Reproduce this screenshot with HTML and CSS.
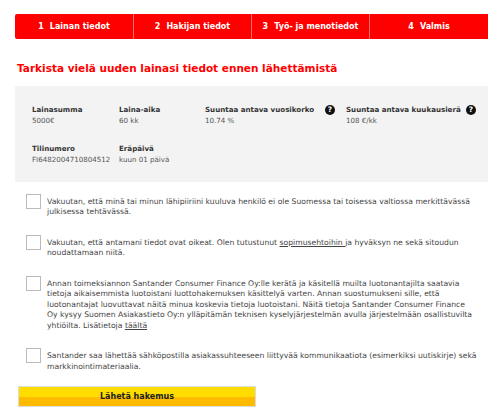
FILE: index.html
```html
<!DOCTYPE html>
<html lang="fi">
<head>
<meta charset="utf-8">
<title>Lainahakemus</title>
<link rel="stylesheet" href="styles.css">
</head>
<body>
<main class="page">
  <nav class="steps">
    <div class="step"><span class="num">1</span>Lainan tiedot</div>
    <div class="step"><span class="num">2</span>Hakijan tiedot</div>
    <div class="step"><span class="num">3</span>Työ- ja menotiedot</div>
    <div class="step"><span class="num">4</span>Valmis</div>
  </nav>
  <h1 class="title">Tarkista vielä uuden lainasi tiedot ennen lähettämistä</h1>
  <section class="summary">
    <div class="row">
      <div class="cell c1"><div class="label">Lainasumma</div><div class="value">5000€</div></div>
      <div class="cell c2"><div class="label">Laina-aika</div><div class="value">60 kk</div></div>
      <div class="cell c3"><div class="label help-label">Suuntaa antava vuosikorko<span class="help">?</span></div><div class="value">10.74 %</div></div>
      <div class="cell c4"><div class="label help-label">Suuntaa antava kuukausierä<span class="help">?</span></div><div class="value">108 €/kk</div></div>
    </div>
    <div class="row">
      <div class="cell c1"><div class="label">Tilinumero</div><div class="value">FI6482004710804512</div></div>
      <div class="cell c2"><div class="label">Eräpäivä</div><div class="value">kuun 01 päivä</div></div>
    </div>
  </section>
  <div class="consents">
    <label class="consent"><span class="box"></span><span class="text">Vakuutan, että minä tai minun lähipiiriini kuuluva henkilö ei ole Suomessa tai toisessa valtiossa merkittävässä julkisessa tehtävässä.</span></label>
    <label class="consent"><span class="box"></span><span class="text">Vakuutan, että antamani tiedot ovat oikeat. Olen tutustunut <a href="#">sopimusehtoihin </a>ja hyväksyn ne sekä sitoudun noudattamaan niitä.</span></label>
    <label class="consent"><span class="box"></span><span class="text">Annan toimeksiannon Santander Consumer Finance Oy:lle kerätä ja käsitellä muilta luotonantajilta saatavia tietoja aikaisemmista luotoistani luottohakemuksen käsittelyä varten. Annan suostumukseni sille, että luotonantajat luovuttavat näitä minua koskevia tietoja luotoistani. Näitä tietoja Santander Consumer Finance Oy kysyy Suomen Asiakastieto Oy:n ylläpitämän teknisen kyselyjärjestelmän avulla järjestelmään osallistuvilta yhtiöilta. Lisätietoja <a href="#">täältä</a></span></label>
    <label class="consent"><span class="box"></span><span class="text">Santander saa lähettää sähköpostilla asiakassuhteeseen liittyvää kommunikaatiota (esimerkiksi uutiskirje) sekä markkinointimateriaalia.</span></label>
  </div>
  <button class="send" type="button">Lähetä hakemus</button>
</main>
</body>
</html>
```
FILE: styles.css
```css
* { box-sizing: border-box; }
html, body { margin: 0; padding: 0; background: #fff; }
body { font-family: "DejaVu Sans", Verdana, sans-serif; color: #333; overflow: hidden; }
.page { width: 500px; height: 419px; padding: 14px 12px 0 15px; }

.steps { display: flex; height: 25px; background: #f00; border-radius: 2px 0 0 2px; width: 473px; }
.step { width: 118px; display: flex; align-items: center; justify-content: center; color: #fff; font-size: 8px; font-weight: bold; border-left: 1px solid #ff6a6a; }
.step:first-child { border-left: 0; }
.step:last-child { flex: 1; }
.num { margin-right: 6px; }

.title { margin: 21px 0 0 2px; height: 16px; font-size: 10.5px; line-height: 16px; font-weight: bold; color: #f00; white-space: nowrap; }

.summary { margin-top: 10px; width: 473px; height: 96px; background: #f3f3f3; padding: 17px 0 0 17px; }
.row { display: flex; height: 39px; }
.cell { font-size: 7.1px; line-height: 11px; padding-top: 1px; }
.c1 { width: 87px; }
.c2 { width: 86px; }
.c3 { width: 141px; }
.label { font-weight: bold; color: #333; white-space: nowrap; }
.help-label { display: flex; justify-content: space-between; align-items: center; width: 130px; }
.value { color: #555; white-space: nowrap; }
.help { display: block; width: 10px; height: 10px; border-radius: 50%; background: #111; color: #fff; font-size: 7.5px; line-height: 10px; text-align: center; }

.consents { margin-top: 12px; padding-left: 11px; width: 461px; }
.consent { display: flex; margin-bottom: 17.2px; }
.consent:last-child { margin-bottom: 0; margin-right: -4px; }
.box { flex: none; width: 15px; height: 15px; background: #fff; border: 1px solid #bbb; margin-right: 6px; }
.text { font-size: 7.67px; line-height: 10.4px; color: #444; padding-top: 3px; }
.text a { color: #444; text-decoration: underline; }

.send { display: block; margin: 14px 0 0 3px; width: 238px; height: 21px; padding: 0; border: 1px solid #ddd; background: linear-gradient(#fd0 50%, #fb0 50%); color: #222; font-family: inherit; font-size: 8px; font-weight: bold; }
```
